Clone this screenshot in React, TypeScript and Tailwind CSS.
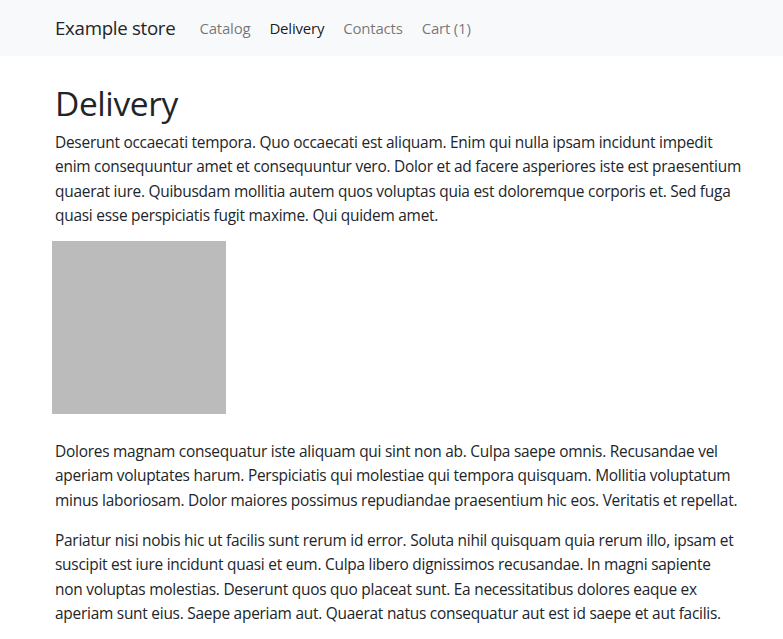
const links = [
  { label: 'Catalog', active: false },
  { label: 'Delivery', active: true },
  { label: 'Contacts', active: false },
  { label: 'Cart (1)', active: false },
]

const paragraphsTop = [
  'Deserunt occaecati tempora. Quo occaecati est aliquam. Enim qui nulla ipsam incidunt impedit enim consequuntur amet et consequuntur vero. Dolor et ad facere asperiores iste est praesentium quaerat iure. Quibusdam mollitia autem quos voluptas quia est doloremque corporis et. Sed fuga quasi esse perspiciatis fugit maxime. Qui quidem amet.',
]

const paragraphsBottom = [
  'Dolores magnam consequatur iste aliquam qui sint non ab. Culpa saepe omnis. Recusandae vel aperiam voluptates harum. Perspiciatis qui molestiae qui tempora quisquam. Mollitia voluptatum minus laboriosam. Dolor maiores possimus repudiandae praesentium hic eos. Veritatis et repellat.',
  'Pariatur nisi nobis hic ut facilis sunt rerum id error. Soluta nihil quisquam quia rerum illo, ipsam et suscipit est iure incidunt quasi et eum. Culpa libero dignissimos recusandae. In magni sapiente non voluptas molestias. Deserunt quos quo placeat sunt. Ea necessitatibus dolores eaque ex aperiam sunt eius. Saepe aperiam aut. Quaerat natus consequatur aut est id saepe et aut facilis.',
]

export default function App() {
  return (
    <div className="min-h-screen bg-white font-['Open_Sans',sans-serif] text-[#212529]">
      <nav className="flex h-[56px] items-center bg-[#f8f9fa] px-[55px]">
        <span className="text-[18.7px] leading-none tracking-[-0.3px]">Example store</span>
        <ul className="ml-[24px] flex items-center gap-[19px] text-[15px] tracking-[-0.2px]">
          {links.map((l) => (
            <li key={l.label} className={l.active ? 'text-black/90' : 'text-black/55'}>
              {l.label}
            </li>
          ))}
        </ul>
      </nav>

      <main className="pl-[55px] pt-[28px]">
        <div className="w-[689px]">
          <h1 className="text-[33.5px] leading-[38px] tracking-[-0.4px]">Delivery</h1>
          {paragraphsTop.map((p, i) => (
            <p key={i} className="mt-[8px] text-[15.45px] leading-[24.3px] tracking-[-0.25px]">
              {p}
            </p>
          ))}
          <div className="ml-[-3px] mt-[14px] h-[173px] w-[174px] bg-[#bbbbbb]" />
          <div className="mt-[25px] flex w-[686px] flex-col gap-[16px]">
            {paragraphsBottom.map((p, i) => (
              <p key={i} className="text-[15.45px] leading-[24.3px] tracking-[-0.25px]">
                {p}
              </p>
            ))}
          </div>
        </div>
      </main>
    </div>
  )
}
